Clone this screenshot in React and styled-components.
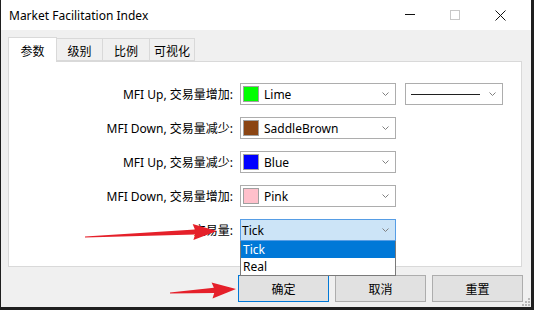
import React from "react";
import styled, { createGlobalStyle } from "styled-components";

const GlobalStyle = createGlobalStyle`
  html, body {
    margin: 0;
    padding: 0;
    background: #1f1f1f;
  }
  body {
    font-family: "Noto Sans", "Noto Sans CJK SC", sans-serif;
    font-size: 12px;
    color: #000;
  }
`;

const Window = styled.div`
  position: relative;
  margin-left: 1px;
  width: 530px;
  height: 307px;
  display: flex;
  flex-direction: column;
  background: #f0f0f0;
  overflow: hidden;
`;

const TitleBar = styled.div`
  height: 30px;
  flex: none;
  background: #fff;
  display: flex;
  align-items: center;
  padding-left: 8px;
  padding-right: 8px;
`;

const Title = styled.div`
  flex: 1;
  font-size: 12px;
  color: #000;
`;

const WinButton = styled.div`
  width: 45px;
  height: 30px;
  display: flex;
  align-items: center;
  justify-content: center;
`;

const Body = styled.div`
  flex: 1;
  display: flex;
  flex-direction: column;
  padding: 7px 8px 0 7px;
`;

const TabStrip = styled.div`
  display: flex;
  align-items: flex-end;
  height: 24px;
  position: relative;
  z-index: 2;
`;

const Tab = styled.div`
  width: ${(p) => p.$w}px;
  height: ${(p) => (p.$active ? 25 : 23)}px;
  margin-bottom: ${(p) => (p.$active ? -1 : 0)}px;
  box-sizing: border-box;
  border: 1px solid #d9d9d9;
  border-bottom: ${(p) => (p.$active ? "none" : "1px solid #d9d9d9")};
  border-left: ${(p) => (p.$active || p.$first ? "1px solid #d9d9d9" : "none")};
  background: ${(p) => (p.$active ? "#fff" : "#f0f0f0")};
  display: flex;
  align-items: center;
  justify-content: center;
  padding-top: ${(p) => (p.$active ? 0 : 1)}px;
  font-size: 12px;
  font-family: "Noto Sans CJK SC", sans-serif;
`;

const Panel = styled.div`
  height: 206px;
  margin-right: 1px;
  box-sizing: border-box;
  background: #fff;
  border: 1px solid #d9d9d9;
  padding-top: 21px;
`;

const Form = styled.div`
  display: grid;
  grid-template-columns: 224px 156px 100px;
  column-gap: 7px;
  row-gap: 12px;
  align-items: center;
`;

const Label = styled.div`
  text-align: right;
  font-size: 12px;
  white-space: nowrap;
  color: #000;
`;

const Combo = styled.div`
  position: relative;
  height: 22px;
  box-sizing: border-box;
  border: 1px solid ${(p) => (p.$focus ? "#569de5" : "#adadad")};
  background: ${(p) => (p.$focus ? "#cce4f7" : "#fff")};
  display: flex;
  align-items: center;
  padding-left: ${(p) => (p.$plain ? 1 : 2)}px;
  padding-right: 6px;
  gap: 5px;
  margin-left: ${(p) => (p.$shift ? 2 : 0)}px;
`;

const Swatch = styled.div`
  width: 16px;
  height: 16px;
  box-sizing: border-box;
  border: 1px solid #a0a0a0;
  background: ${(p) => p.$color};
  flex: none;
`;

const ComboText = styled.div`
  flex: 1;
  font-size: 12px;
  color: #000;
`;

const LineSample = styled.div`
  flex: 1;
  height: 1px;
  background: #202020;
  margin-left: 3px;
  margin-right: 4px;
`;

const DropList = styled.div`
  position: absolute;
  left: -1px;
  right: -1px;
  top: 21px;
  box-sizing: border-box;
  border: 1px solid #7a7a7a;
  border-top: none;
  background: #fff;
  z-index: 5;
`;

const Option = styled.div`
  height: 17px;
  line-height: 17px;
  padding-left: 2px;
  font-size: 12px;
  background: ${(p) => (p.$selected ? "#0078d7" : "#fff")};
  color: ${(p) => (p.$selected ? "#fff" : "#000")};
`;

const ButtonRow = styled.div`
  display: flex;
  justify-content: flex-end;
  gap: 6px;
  margin-top: 8px;
  position: relative;
`;

const Button = styled.div`
  width: 91px;
  height: 27px;
  box-sizing: border-box;
  border: 1px solid ${(p) => (p.$default ? "#0078d7" : "#adadad")};
  background: #e1e1e1;
  display: flex;
  align-items: center;
  justify-content: center;
  font-size: 12px;
  font-family: "Noto Sans CJK SC", sans-serif;
`;

const Grip = styled.svg`
  position: absolute;
  right: 1px;
  bottom: 1px;
`;

const Overlay = styled.svg`
  position: absolute;
  left: 0;
  top: 0;
  pointer-events: none;
  z-index: 10;
`;

const Chevron = () => (
  <svg width="7" height="4" viewBox="0 0 7 4" style={{ flex: "none" }}>
    <path d="M0.5 0.5 L3.5 3.5 L6.5 0.5" fill="none" stroke="#808080" strokeWidth="1" />
  </svg>
);

const Arrow = ({ x1, y1, x2, y2 }) => {
  const dx = x2 - x1;
  const dy = y2 - y1;
  const len = Math.sqrt(dx * dx + dy * dy);
  const ang = (Math.atan2(dy, dx) * 180) / Math.PI;
  const h = 22;
  return (
    <g transform={`translate(${x1} ${y1}) rotate(${ang})`}>
      <polygon
        fill="#e5202a"
        points={`0,-0.6 ${len - h},-2.6 ${len - h - 2},-8 ${len},0 ${len - h - 2},8 ${len - h},2.6 0,0.6`}
      />
    </g>
  );
};

const rows = [
  { label: "MFI Up, 交易量增加:", color: "#00ff00", name: "Lime", style: true },
  { label: "MFI Down, 交易量减少:", color: "#8b4513", name: "SaddleBrown" },
  { label: "MFI Up, 交易量减少:", color: "#0000ff", name: "Blue" },
  { label: "MFI Down, 交易量增加:", color: "#ffc0cb", name: "Pink" },
];

const tabs = [
  { t: "参数", w: 49, active: true },
  { t: "级别", w: 46 },
  { t: "比例", w: 47 },
  { t: "可视化", w: 45 },
];

export default function App() {
  return (
    <>
      <GlobalStyle />
      <Window>
        <TitleBar>
          <Title>Market Facilitation Index</Title>
          <WinButton>
            <svg width="11" height="2" viewBox="0 0 11 2">
              <line x1="0" y1="0.5" x2="10" y2="0.5" stroke="#111" strokeWidth="1" />
            </svg>
          </WinButton>
          <WinButton>
            <svg width="11" height="11" viewBox="0 0 11 11">
              <rect x="0.5" y="0.5" width="9" height="9" fill="none" stroke="#c8c8c8" strokeWidth="1" />
            </svg>
          </WinButton>
          <WinButton>
            <svg width="11" height="11" viewBox="0 0 11 11">
              <path d="M0.5 0.5 L10.5 10.5 M10.5 0.5 L0.5 10.5" stroke="#111" strokeWidth="1" />
            </svg>
          </WinButton>
        </TitleBar>
        <Body>
          <TabStrip>
            {tabs.map((tab, i) => (
              <Tab key={tab.t} $w={tab.w} $active={tab.active} $first={i === 0}>
                {tab.t}
              </Tab>
            ))}
          </TabStrip>
          <Panel>
            <Form>
              {rows.map((r) => (
                <React.Fragment key={r.label}>
                  <Label>{r.label}</Label>
                  <Combo>
                    <Swatch $color={r.color} />
                    <ComboText>{r.name}</ComboText>
                    <Chevron />
                  </Combo>
                  {r.style ? (
                    <Combo $shift>
                      <LineSample />
                      <Chevron />
                    </Combo>
                  ) : (
                    <div />
                  )}
                </React.Fragment>
              ))}
              <Label>交易量:</Label>
              <Combo $focus $plain>
                <ComboText>Tick</ComboText>
                <Chevron />
                <DropList>
                  <Option $selected>Tick</Option>
                  <Option>Real</Option>
                </DropList>
              </Combo>
              <div />
            </Form>
          </Panel>
          <ButtonRow>
            <Button $default>确定</Button>
            <Button>取消</Button>
            <Button>重置</Button>
          </ButtonRow>
        </Body>
        <Grip width="8" height="8" viewBox="0 0 8 8">
          {[
            [6, 0],
            [6, 3],
            [3, 3],
            [6, 6],
            [3, 6],
            [0, 6],
          ].map(([x, y]) => (
            <rect key={`${x}-${y}`} x={x} y={y} width="2" height="2" fill="#b8b8b8" />
          ))}
        </Grip>
        <Overlay width="530" height="307">
          <Arrow x1={84} y1={237} x2={216} y2={231} />
          <Arrow x1={169} y1={293} x2={235} y2={289} />
        </Overlay>
      </Window>
    </>
  );
}
